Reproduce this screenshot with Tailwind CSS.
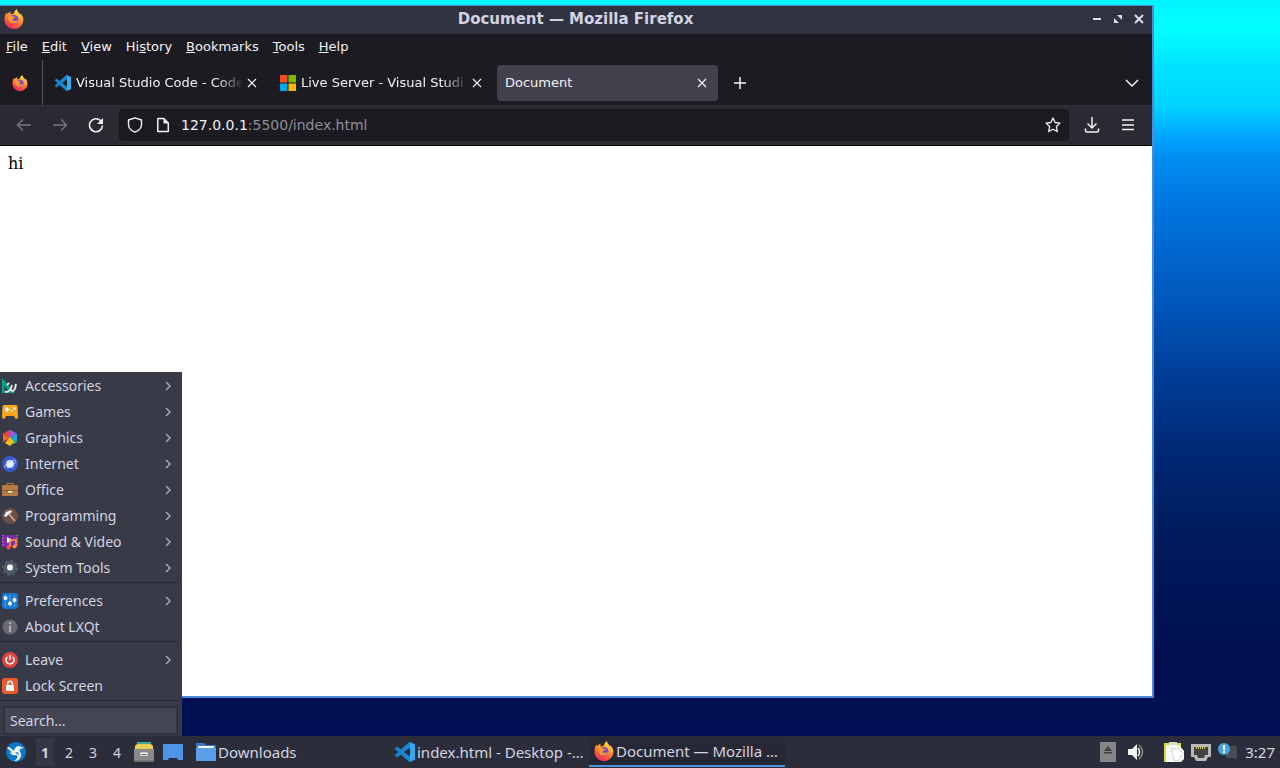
<!DOCTYPE html>
<html lang="en">
  <head>
    <meta charset="UTF-8" />
    <meta name="viewport" content="width=device-width, initial-scale=1.0" />
    <title>Document</title>
    <script src="https://cdn.jsdelivr.net/npm/@tailwindcss/browser@4"></script>
  </head>
  <body class="h-screen flex flex-col overflow-hidden font-['DejaVu_Sans',sans-serif]">
    <!-- Shared icons -->
    <svg class="absolute w-0 h-0" aria-hidden="true">
      <defs>
        <linearGradient id="flame" x1="0.8" y1="0" x2="0.3" y2="1">
          <stop offset="0" stop-color="#fff04a" />
          <stop offset="0.4" stop-color="#ffa32e" />
          <stop offset="0.7" stop-color="#ff5a3a" />
          <stop offset="1" stop-color="#ee2468" />
        </linearGradient>
        <symbol id="firefox" viewBox="0 0 24 24">
          <path fill="url(#flame)" d="M22.6 10c-.5-2.200-1.900-4-3.400-5 .4.900.6 1.500.6 2.300C18.600 4.700 15.500 3 15.600 0c-2.400 1.400-3.700 3.600-3.800 5.600-1.300.1-2.300.5-3 1C7.500 5.800 7.500 4.200 8 3 5.900 4 4.700 5.200 4 6.300c-.6-.5-.8-1.400-.7-2.300C1.400 6 .5 9.500.6 12.600.7 19 5.700 24 12 24c6.200 0 11.200-5 11.200-11.200 0-1-.2-2-.6-2.800z" />
          <circle cx="12" cy="12.500" r="5.300" fill="#7c4bd0" />
          <path fill="#ff9a32" d="M5 8.500c2.500-.8 4.700-.3 6 .8h2.600c-.2 1.400-2.200 2-2.700 2.400-.4.600 0 1.600-.8 2 2.300 1.600 4.500-.3 6.700.4-1 3.100-6.800 4.300-10 1.200C4.700 13.600 4.300 11 5 8.500z" />
        </symbol>
        <symbol id="vscode" viewBox="0 0 24 24">
          <path fill="#1787d2" d="M23.150 2.587L18.210.21a1.494 1.494 0 0 0-1.705.29l-9.460 8.630-4.120-3.128a.999.999 0 0 0-1.276.057L.327 7.261A1 1 0 0 0 .326 8.740L3.899 12 .326 15.260a1 1 0 0 0 .001 1.479L1.650 17.940a.999.999 0 0 0 1.276.057l4.120-3.128 9.460 8.630a1.492 1.492 0 0 0 1.704.290l4.942-2.377A1.500 1.500 0 0 0 24 20.060V3.939a1.500 1.500 0 0 0-.850-1.352zm-5.146 14.861L10.826 12l7.178-5.448v10.896z" />
          <path fill="#38a8f0" d="M18 .2l5.200 2.400c.5.300.8.800.8 1.300v16.200c0 .6-.3 1-.8 1.300L18 23.800z" />
        </symbol>
        <symbol id="close" viewBox="0 0 10 10">
          <path fill="none" stroke="currentColor" stroke-width="1.200" d="M1 1l8 8M9 1L1 9" />
        </symbol>
        <symbol id="chevron" viewBox="0 0 8 10">
          <path fill="none" stroke="#a3a6b3" stroke-width="1.500" d="M2 1l4 4-4 4" />
        </symbol>
      </defs>
    </svg>

    <!-- Desktop -->
    <main class="relative flex-1 min-h-0 bg-[linear-gradient(to_bottom,#00f4ff_0px,#00ffff_30px,#00e4ff_65px,#00d4ff_105px,#00a8ff_135px,#008cf0_160px,#0072dc_215px,#0058bc_300px,#003e98_375px,#002a76_445px,#001c5e_530px,#001355_610px,#000f4e_660px,#001054_736px)]">
      <!-- Browser window -->
      <section class="absolute left-0 top-[5px] right-[126px] bottom-[38px] flex flex-col bg-white border-[#4c8ad8] border-t border-r-2 border-b-2">
        <header class="h-7 shrink-0 flex items-center px-1 pb-0.5 bg-[#31323f] text-[#d3d3e3]">
          <svg class="size-5"><use href="#firefox" /></svg>
          <h1 class="flex-1 pl-9 text-center text-[15px] leading-5 font-bold">Document — Mozilla Firefox</h1>
          <div class="flex items-center gap-[9px] pr-[3px]">
            <button aria-label="Minimize"><svg class="size-3" viewBox="0 0 12 12"><path fill="#dcdcea" d="M2 5h8v2H2z" /></svg></button>
            <button aria-label="Maximize"><svg class="size-3" viewBox="0 0 12 12"><path fill="#dcdcea" d="M5 2h5v5zM2 5v5h5z" /></svg></button>
            <button aria-label="Close"><svg class="size-3" viewBox="0 0 12 12"><path stroke="#dcdcea" stroke-width="2" d="M2 2l8 8M10 2l-8 8" /></svg></button>
          </div>
        </header>

        <nav class="h-[26px] shrink-0 flex items-center gap-[14px] px-1.5 bg-[#1c1b21] text-[#f2f2f5] text-[13px]">
          <button><u>F</u>ile</button>
          <button><u>E</u>dit</button>
          <button><u>V</u>iew</button>
          <button>Hi<u>s</u>tory</button>
          <button><u>B</u>ookmarks</button>
          <button><u>T</u>ools</button>
          <button><u>H</u>elp</button>
        </nav>

        <!-- Tabs -->
        <div class="h-[45px] shrink-0 flex items-center bg-[#1c1b21] text-[#f2f2f5] text-[13px]">
          <button class="w-[43px] h-full pl-3 border-r border-[#56555c]" aria-label="Firefox View">
            <svg class="size-4"><use href="#firefox" /></svg>
          </button>
          <div class="w-[225px] flex items-center pl-3 pr-[7px]">
            <svg class="size-4 mr-[5px] shrink-0"><use href="#vscode" /></svg>
            <span class="flex-1 overflow-hidden whitespace-nowrap mask-r-from-85% mask-r-to-100%">Visual Studio Code - Code</span>
            <button class="p-1" aria-label="Close tab"><svg class="size-[10px]"><use href="#close" /></svg></button>
          </div>
          <div class="w-[225px] flex items-center pl-3 pr-[7px]">
            <svg class="size-4 mr-[5px] shrink-0" viewBox="0 0 16 16">
              <path fill="#f25022" d="M0 0h7.500v7.500H0z" />
              <path fill="#7fba00" d="M8.500 0H16v7.500H8.500z" />
              <path fill="#00a4ef" d="M0 8.500h7.500V16H0z" />
              <path fill="#ffb900" d="M8.500 8.500H16V16H8.500z" />
            </svg>
            <span class="flex-1 overflow-hidden whitespace-nowrap mask-r-from-85% mask-r-to-100%">Live Server - Visual Studi</span>
            <button class="p-1" aria-label="Close tab"><svg class="size-[10px]"><use href="#close" /></svg></button>
          </div>
          <div class="w-[221px] h-9 ml-1 flex items-center pl-2 pr-[7px] rounded bg-[#43414d]">
            <span class="flex-1">Document</span>
            <button class="p-1" aria-label="Close tab"><svg class="size-[10px]"><use href="#close" /></svg></button>
          </div>
          <button class="ml-[15px]" aria-label="New tab">
            <svg class="size-[14px]" viewBox="0 0 14 14"><path stroke="#f2f2f5" stroke-width="1.500" d="M7 1v12M1 7h12" /></svg>
          </button>
          <button class="ml-auto mr-[13px]" aria-label="List all tabs">
            <svg class="size-[14px]" viewBox="0 0 14 14"><path fill="none" stroke="#f2f2f5" stroke-width="1.500" d="M1 4l6 6 6-6" /></svg>
          </button>
        </div>

        <!-- Address bar -->
        <div class="h-[41px] shrink-0 flex items-center px-4 pb-0.5 bg-[#2b2a32] border-t border-b border-t-[#33323a] border-b-black text-[#f2f2f5]">
          <button aria-label="Back"><svg class="size-4" viewBox="0 0 16 16"><path fill="none" stroke="#77767e" stroke-width="1.300" d="M15 8H1.500M7 2.500L1.500 8 7 13.500" /></svg></button>
          <button class="ml-5" aria-label="Forward"><svg class="size-4" viewBox="0 0 16 16"><path fill="none" stroke="#77767e" stroke-width="1.300" d="M1 8h13.500M9 2.500L14.500 8 9 13.500" /></svg></button>
          <button class="ml-5" aria-label="Reload"><svg class="size-4" viewBox="0 0 16 16"><path fill="none" stroke="#f2f2f5" stroke-width="1.600" d="M14.500 8.500A6.500 6.500 0 1 1 12.500 3.500L14 5" /><path fill="#f2f2f5" d="M15 1v6H9z" /></svg></button>
          <div class="ml-[15px] mr-[15px] flex-1 h-8 flex items-center px-2 rounded bg-[#1c1b21]">
            <svg class="size-4 shrink-0" viewBox="0 0 16 16"><path fill="none" stroke="#f2f2f5" stroke-width="1.400" stroke-linejoin="round" d="M8 .800L14.500 3v4.500c0 3.500-2.500 6.200-6.500 7.700-4-1.500-6.500-4.200-6.500-7.700V3z" /></svg>
            <svg class="size-4 ml-3 shrink-0" viewBox="0 0 16 16"><path fill="none" stroke="#f2f2f5" stroke-width="1.500" stroke-linejoin="round" d="M2.800 1.500h6L13.300 6v8.500H2.800z" /><path fill="#f2f2f5" d="M8.500 1.500L13.300 6.500H8.500z" /></svg>
            <a href="#" class="ml-2.5 flex-1 text-sm text-[#8f8e96]"><span class="text-[#f2f2f5]">127.0.0.1</span>:5500/index.html</a>
            <button aria-label="Bookmark this page"><svg class="size-4" viewBox="0 0 16 16"><path fill="none" stroke="#f2f2f5" stroke-width="1.300" stroke-linejoin="round" d="M8 1l2.100 4.500 4.900.600-3.600 3.400.900 5L8 12.200l-4.300 2.300.900-5L1 6.100l4.900-.600z" /></svg></button>
          </div>
          <button class="mr-5" aria-label="Downloads"><svg class="size-4" viewBox="0 0 16 16"><path fill="none" stroke="#f2f2f5" stroke-width="1.500" d="M8 0v10.500M3.500 6.500L8 11l4.500-4.500M1.500 11.500v2q0 1.500 1.500 1.500h10q1.500 0 1.500-1.500v-2" /></svg></button>
          <button aria-label="Open menu"><svg class="size-4" viewBox="0 0 16 16"><path stroke="#f2f2f5" stroke-width="1.500" d="M2 3h12M2 8h12M2 12.500h12" /></svg></button>
        </div>

        <article class="flex-1 bg-white text-black p-2 font-['DejaVu_Serif',serif] text-base leading-5">hi</article>
      </section>

      <!-- Start menu -->
      <aside class="absolute left-0 bottom-0 w-[182px] bg-[#383a47] pt-px text-[#d3d4e2] text-[14px] font-['Noto_Sans',sans-serif]">
        <ul class="[&_button]:flex [&_button]:w-full [&_button]:h-[26px] [&_button]:items-center [&_button]:gap-[7px] [&_button]:pl-0.5 [&_button]:pr-[10px] [&_span]:flex-1 [&_span]:pb-0.5 [&_span]:text-left">
          <li>
            <button>
              <svg class="size-4" viewBox="0 0 16 16"><path fill="#10a088" d="M0 0l13 15H0z" /><path fill="#383a47" d="M2.500 8l4 5h-4z" /><path fill="none" stroke="#e8ecee" stroke-width="1.800" d="M3 14c5 0 6-3 7-7M9 12c2 2 4 1 5-6M5 7l2-2" /></svg>
              <span>Accessories</span><svg class="w-2 h-2.5"><use href="#chevron" /></svg>
            </button>
          </li>
          <li>
            <button>
              <svg class="size-4" viewBox="0 0 16 16"><path fill="#fba51c" d="M2 1h12q1.500 0 1.500 2L16 13q0 2-2 2-1 0-2-3H4q-1 3-2 3-2 0-2-2L.5 3Q.5 1 2 1z" /><path stroke="#fff" stroke-width="1.500" d="M2.500 5.500h5M5 3v5" /><circle cx="10" cy="7" r="1" fill="#fff" /><circle cx="12.500" cy="4.500" r="1.200" fill="#fff" /></svg>
              <span>Games</span><svg class="w-2 h-2.5"><use href="#chevron" /></svg>
            </button>
          </li>
          <li>
            <button>
              <svg class="size-4" viewBox="0 0 16 16"><path fill="#e9433f" d="M8 8L1 3.500 8 0z" /><path fill="#f4642f" d="M8 8L1 12V3.500z" /><path fill="#9c5be0" d="M8 8V0l7 3.500z" /><path fill="#16a9e0" d="M8 8l7-4.500V12z" /><path fill="#2eb573" d="M8 8l7 4-4 2.500z" /><path fill="#fbbd22" d="M8 7l4 5-4 4-5-3z" /></svg>
              <span>Graphics</span><svg class="w-2 h-2.5"><use href="#chevron" /></svg>
            </button>
          </li>
          <li>
            <button>
              <svg class="size-4" viewBox="0 0 16 16"><circle cx="8" cy="8" r="8" fill="#3a58c8" /><circle cx="8" cy="8" r="4" fill="#e8f0fc" /><path fill="none" stroke="#a8bdf4" d="M3 12C1 9 10 3 13 4s-3 8-8 8" /></svg>
              <span>Internet</span><svg class="w-2 h-2.5"><use href="#chevron" /></svg>
            </button>
          </li>
          <li>
            <button>
              <svg class="size-4" viewBox="0 0 16 16"><path fill="none" stroke="#9a6536" stroke-width="1.500" d="M5 4V1.500h6V4" /><rect y="3" width="16" height="11" rx="1" fill="#b87a45" /><path fill="#8c5a30" d="M0 8h16v1H0z" /><path fill="#fff" d="M6 9h4v1.500H6z" /></svg>
              <span>Office</span><svg class="w-2 h-2.5"><use href="#chevron" /></svg>
            </button>
          </li>
          <li>
            <button>
              <svg class="size-4" viewBox="0 0 16 16"><circle cx="8" cy="8" r="8" fill="#6b5049" /><path stroke="#d8a38a" stroke-width="1.800" d="M7 6l6 7" /><path fill="#eee" d="M2 8l2-4 5-2 1 2-3 2-3 3z" /></svg>
              <span>Programming</span><svg class="w-2 h-2.5"><use href="#chevron" /></svg>
            </button>
          </li>
          <li>
            <button>
              <svg class="size-4" viewBox="0 0 16 16"><path fill="#7a2fa8" d="M0 1h16v12H0z" /><path stroke="#c49ae0" stroke-dasharray="1 2" d="M1 1v12M15 1v12" /><path fill="#fff" d="M5 3l6 3.500L5 9z" /><path fill="none" stroke="#f8893a" stroke-width="1.800" d="M8 13V7l6-1.500V12" /><circle cx="6.500" cy="13.500" r="2" fill="#f4513b" /><circle cx="12.500" cy="12.500" r="2" fill="#f8893a" /></svg>
              <span>Sound &amp; Video</span><svg class="w-2 h-2.5"><use href="#chevron" /></svg>
            </button>
          </li>
          <li>
            <button>
              <svg class="size-4" viewBox="0 0 16 16"><circle cx="8" cy="8" r="6.500" fill="#4c5d68" /><circle cx="8" cy="8" r="7" fill="none" stroke="#4c5d68" stroke-width="2" stroke-dasharray="3 2.500" /><circle cx="8" cy="7.500" r="3" fill="#fff" /></svg>
              <span>System Tools</span><svg class="w-2 h-2.5"><use href="#chevron" /></svg>
            </button>
          </li>
          <li class="h-[7px] pt-px"><hr class="border-[#262833] mr-1" /></li>
          <li>
            <button>
              <svg class="size-4" viewBox="0 0 16 16"><rect width="16" height="16" rx="3" fill="#1976d2" /><path stroke="#5aa6ec" d="M3.500 2v12M8 2v12M12.500 2v12" /><circle cx="3.500" cy="5" r="2" fill="#fff" /><circle cx="8" cy="10.500" r="2" fill="#fff" /><circle cx="12.500" cy="7" r="2" fill="#fff" /></svg>
              <span>Preferences</span><svg class="w-2 h-2.5"><use href="#chevron" /></svg>
            </button>
          </li>
          <li>
            <button>
              <svg class="size-4" viewBox="0 0 16 16"><circle cx="8" cy="8" r="7.500" fill="#6a6b72" /><path fill="#b0b0b6" d="M7 3h2v2H7zM7 6.500h2V13H7z" /></svg>
              <span>About LXQt</span>
            </button>
          </li>
          <li class="h-[7px] pt-px"><hr class="border-[#262833] mr-1" /></li>
          <li>
            <button>
              <svg class="size-4" viewBox="0 0 16 16"><circle cx="8" cy="8" r="8" fill="#de4340" /><path fill="none" stroke="#fff" stroke-width="1.600" d="M5.300 5a4 4 0 1 0 5.400 0M8 3v5" /></svg>
              <span>Leave</span><svg class="w-2 h-2.5"><use href="#chevron" /></svg>
            </button>
          </li>
          <li>
            <button>
              <svg class="size-4" viewBox="0 0 16 16"><rect width="16" height="16" rx="3" fill="#ee5a2c" /><path fill="none" stroke="#fff" stroke-width="1.500" d="M5.700 8V5.500a2.300 2.300 0 0 1 4.600 0V8" /><rect x="4" y="7" width="8" height="6" rx="1" fill="#fff" /></svg>
              <span>Lock Screen</span>
            </button>
          </li>
          <li class="h-[7px] pt-px"><hr class="border-[#262833] mr-1" /></li>
        </ul>
        <div class="pl-[3px] pr-1 pb-px">
          <input type="text" placeholder="Search..." aria-label="Search" class="block w-full h-[29px] px-[5px] border-2 border-[#30323d] bg-[#434552] placeholder:text-[#d3d4e2]" />
        </div>
      </aside>
    </main>

    <!-- Taskbar -->
    <footer class="h-8 shrink-0 flex items-center px-[5px] bg-[#2b2e3a] text-[#d3d4e2] text-[15px] font-['Noto_Sans',sans-serif]">
      <button aria-label="Applications">
        <svg class="size-[22px]" viewBox="0 0 22 22"><circle cx="11" cy="11" r="10" fill="#0c78cc" /><path fill="#e8f4ff" d="M2 6c3 0 5 2 7 4 0-2 2-5 5-5l5 2-4 1c-1 3 2 4 1 7-1 4-4 5-7 5 3-2 4-4 3-6-4 1-7-1-7-3l3 1C5 10 3 8 2 6z" /><path fill="#0c78cc" d="M10 12c2-2 4 0 4 2-1-1-2-1-4-2z" /></svg>
      </button>
      <div class="flex ml-[6px] mr-[5px] text-[14px]">
        <button class="w-6 h-7 font-bold bg-[#343743] bg-clip-content px-[3px]">1</button>
        <button class="w-6">2</button>
        <button class="w-6">3</button>
        <button class="w-6">4</button>
      </div>
      <button aria-label="File manager">
        <svg class="size-5" viewBox="0 0 20 20"><path fill="#3fa6a0" d="M3 0h14v4H3z" /><path fill="#e8cd57" d="M1 4l2-2h14l2 2v4H1z" /><path fill="#8a8b88" d="M0 7h20v13H0z" /><path fill="#70716f" d="M0 18h20v2H0z" /><rect x="6" y="10" width="8" height="4" rx="2" fill="#ddd" /><path fill="#666" d="M8 12h4v1H8z" /></svg>
      </button>
      <button class="ml-[9px]" aria-label="Show desktop">
        <svg class="size-5" viewBox="0 0 20 20"><path fill="#4f94e6" d="M0 2h20v16h-5l-1-2H6l-1 2H0z" /></svg>
      </button>

      <div class="flex flex-1 gap-[3px] ml-2 [&_button]:flex [&_button]:w-[196px] [&_button]:h-[30px] [&_button]:items-center [&_button]:gap-0.5 [&_button]:pl-[5px] [&_svg]:shrink-0 [&_span]:truncate">
        <button>
          <svg class="size-5" viewBox="0 0 20 20"><path fill="#3c78c8" d="M0 1h8l2 2h10v6H0z" /><path fill="#f0f4fa" d="M2 4h16v3H2z" /><path fill="#5c9eea" d="M0 6h20v12q0 1-1 1H1q-1 0-1-1z" /></svg>
          <span>Downloads</span>
        </button>
        <button>
          <svg class="size-5"><use href="#vscode" /></svg>
          <span>index.html - Desktop -…</span>
        </button>
        <button class="bg-[#262935] border-b-2 border-[#5093dc]">
          <svg class="size-5"><use href="#firefox" /></svg>
          <span>Document — Mozilla …</span>
        </button>
      </div>

      <div class="flex items-center shrink-0">
        <button aria-label="Removable media"><svg class="w-4 h-5" viewBox="0 0 16 20"><path fill="#858585" d="M0 0h16v20H0z" /><path fill="#3f4146" d="M8 4l4 5H4zM4 10h8v1.500H4z" /></svg></button>
        <button class="ml-[11px]" aria-label="Volume"><svg class="size-[18px]" viewBox="0 0 18 18"><path fill="#f5f5f5" d="M1 6h4l5-5v16l-5-5H1z" /><path fill="none" stroke="#f5f5f5" stroke-width="1.500" d="M11 5q3 4 0 8" /><path fill="none" stroke="#85868e" stroke-width="1.500" d="M12 2q7 7 0 14" /></svg></button>
        <button class="ml-[19px]" aria-label="Clipboard"><svg class="size-5" viewBox="0 0 20 20"><path fill="#d6dc3a" d="M0 1h17v19H0z" /><path fill="#f8f8f4" d="M2 3h13l5 6v8l-3 3H2z" /><path fill="#fff" stroke="#c2c4c0" stroke-width=".7" d="M7 7h8l4 4-5 8-4-1z" /><path fill="#d8d8d4" d="M5 0h8v3H5z" /></svg></button>
        <button class="ml-[7px]" aria-label="Network"><svg class="size-5" viewBox="0 0 20 20"><path fill="#b9bab8" d="M0 2h20v13h-3l-2 4H5l-2-4H0z" /><path fill="#42433f" d="M3 5h14v8h-3l-1 3H7l-1-3H3z" /><path stroke="#d8d26a" stroke-width="2" stroke-dasharray="1 1" d="M5 6h10" /></svg></button>
        <button class="ml-[7px]" aria-label="Notifications"><svg class="size-5" viewBox="0 0 20 20"><path fill="#484a54" d="M8 4h11v13l-4-1H8z" /><circle cx="6" cy="7" r="6" fill="#45a5dc" /><path fill="#fff" d="M5 3h2v5H5zM5 9h2v2H5z" /></svg></button>
        <time class="ml-[7px]">3:27</time>
      </div>
    </footer>
  </body>
</html>
